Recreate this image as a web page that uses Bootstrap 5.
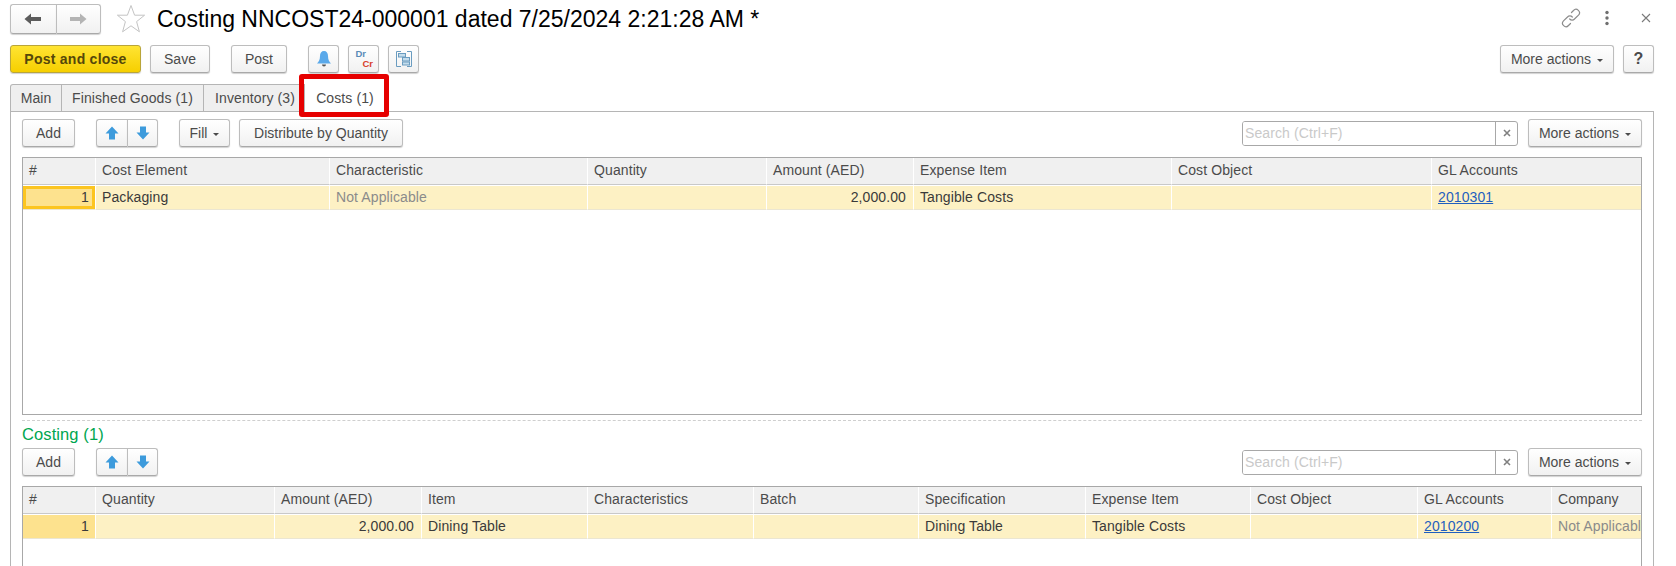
<!DOCTYPE html>
<html lang="en">
<head>
    <meta charset="UTF-8">
    <meta name="viewport" content="width=device-width, initial-scale=1.0">
    <title>Costing NNCOST24-000001</title>
    <link href="https://cdn.jsdelivr.net/npm/bootstrap@5.3.2/dist/css/bootstrap.min.css" rel="stylesheet">
    <style>
        html, body { height: 566px; overflow: hidden; }
        body {
            background: #fff;
            color: #4b4b4b;
            font-family: "Liberation Sans", Arial, sans-serif;
            font-size: 14px;
            letter-spacing: .1px;
        }
        .doc-page { height: 566px; padding: 0 22px 0 10px; }
        .title-row { height: 45px; padding-top: 4px; }
        .doc-title { font-size: 23px; color: #000; margin: 0 0 0 11px; font-weight: 400; line-height: 30px; white-space: nowrap; letter-spacing: 0; }
        .star-icon { margin-left: 15px; }
        .top-icons { height: 28px; margin-right: 3px; }
        .top-icons .icon-dots { margin-left: 24px; }
        .top-icons .icon-close { margin-left: 32px; }

        .ui-btn {
            height: 28px;
            padding: 0;
            display: inline-flex;
            align-items: center;
            justify-content: center;
            border: 1px solid #bdbdbd;
            border-bottom-color: #a9a9a9;
            border-radius: 3px;
            background: linear-gradient(#ffffff, #f1f1f1);
            box-shadow: 0 1px 1px rgba(0,0,0,.18);
            color: #4b4b4b;
            font-size: 14px;
            white-space: nowrap;
            flex: none;
        }
        .caret-mark { display: inline-block; margin-left: 6px; margin-top: 2px; border: 3px solid transparent; border-top: 3px solid #4b4b4b; border-bottom: 0; }
        .btn-main {
            width: 131px;
            font-weight: 700;
            color: #55470a;
            letter-spacing: .25px;
            background: linear-gradient(#ffe433, #f6cf00);
            border-color: #b9a53a;
        }
        .w-save { width: 60px; margin-left: 9px; }
        .w-post { width: 56px; margin-left: 21px; }
        .w-icon { width: 31px; margin-left: 9px; }
        .w-bell { margin-left: 21px; }
        .w-more { width: 114px; }
        .w-help { width: 31px; margin-left: 9px; font-weight: 700; font-size: 16px; }
        .w-add { width: 53px; }
        .w-fill { width: 51px; margin-left: 21px; }
        .w-dist { width: 164px; margin-left: 9px; }

        .arrow-pair { width: 62px; height: 28px; margin-left: 21px; flex: none; }
        .arrow-pair .ui-btn { width: 50%; }
        .arrow-pair .ui-btn:first-child { border-radius: 3px 0 0 3px; border-right: 0; }
        .arrow-pair .ui-btn:last-child { border-radius: 0 3px 3px 0; }
        .nav-pair { width: 91px; height: 30px; margin-left: 0; }
        .nav-pair .ui-btn { height: 30px; }

        .dr-mark { width: 26px; height: 22px; position: relative; font-size: 9.5px; font-weight: 700; line-height: 10px; letter-spacing: 0; }
        .dr-mark b { position: absolute; }
        .dr-mark .dr { left: 5px; top: 1px; color: #5a8cb8; }
        .dr-mark .cr { left: 12px; top: 11px; color: #d8402c; }

        .tab-row { height: 28px; margin-top: 11px; }
        .tab-item {
            height: 28px;
            display: flex;
            align-items: center;
            justify-content: center;
            background: #efefef;
            border: 1px solid #b5b5b5;
            border-left: 0;
            border-bottom: 0;
            white-space: nowrap;
        }
        .tab-item:first-child { border-left: 1px solid #b5b5b5; border-radius: 3px 0 0 0; }
        .tab-main { width: 52px; }
        .tab-goods { width: 142px; }
        .tab-stock { width: 101px; padding-left: 2px; }
        .tab-costs { width: 84px; background: #fff; border: 0; position: relative; z-index: 2; height: 29px; padding-right: 4px; }
        .red-frame {
            position: absolute;
            left: -6px;
            top: -10px;
            width: 90px;
            height: 43px;
            border: 5px solid #e60000;
            border-radius: 3px;
        }

        .tab-body {
            border: 1px solid #b5b5b5;
            border-bottom: 0;
            padding: 7px 11px 0;
            height: 455px;
            margin-top: -1px;
        }
        .tool-row { height: 28px; }
        .search-box {
            width: 276px;
            height: 25px;
            margin-right: 10px;
            border: 1px solid #a8a8a8;
            border-radius: 3px;
            overflow: hidden;
        }
        .search-box input {
            flex: 1;
            min-width: 0;
            border: 0;
            outline: 0;
            padding: 0 2px;
            font-size: 14px;
            font-family: inherit;
            letter-spacing: .1px;
        }
        .search-box input::placeholder { color: #c9c9c9; opacity: 1; }
        .search-clear { width: 22px; border-left: 1px solid #a8a8a8; }

        .grid-frame { border: 1px solid #a8a8a8; margin-top: 10px; overflow: hidden; }
        .grid-top { height: 258px; }
        .grid-bottom { flex: 1; border-bottom: 0; }
        .cost-grid { table-layout: fixed; border-collapse: separate; border-spacing: 0; width: 1618px; }
        .cost-grid th, .cost-grid td {
            padding: 0 5px 0 6px;
            font-weight: 400;
            white-space: nowrap;
            overflow: hidden;
            border-right: 1px solid #fff;
        }
        .cost-grid th { height: 27px; padding-bottom: 2px; background: #f0f0f0; border-bottom: 1px solid #c9c9c9; }
        .cost-grid td { height: 25px; background: #fdf1c4; color: #3a3a3a; border-top: 1px solid #fff; border-bottom: 1px solid #ebe6d2; }
        .cost-grid th:last-child, .cost-grid td:last-child { border-right: 0; }
        .cost-grid a { color: #1f5fbf; }
        .cost-grid td.row-num { background: #fde28e; text-align: right; padding-right: 6px; }
        .cost-grid td.row-active { box-shadow: inset 0 0 0 3px #fcc520; }
        .cost-grid td.num-cell { text-align: right; padding-right: 7px; }
        .cost-grid td.muted-cell { color: #8b8b8b; }

        .split-line { border-top: 1px dashed #cfcfcf; margin-top: 5px; }
        .section-title { color: #00a650; font-size: 16.5px; line-height: 20px; margin-top: 3px; margin-bottom: 4px; }
    </style>
</head>
<body>

<svg width="0" height="0" class="d-block">
    <symbol id="arrow-up" viewBox="0 0 16 16"><path d="M8 1.5 14.500 8.500H11V14.500H5V8.500H1.500Z" fill="#3d9bdc"/></symbol>
    <symbol id="arrow-down" viewBox="0 0 16 16"><path d="M8 14.500 14.500 7.500H11V1.500H5V7.500H1.500Z" fill="#3d9bdc"/></symbol>
    <symbol id="clear-x" viewBox="0 0 8 8"><path d="M1 1 7 7M7 1 1 7" stroke="#808080" stroke-width="1.600" fill="none"/></symbol>
</svg>

<div class="doc-page d-flex flex-column">

    <div class="title-row d-flex align-items-start">
        <div class="d-flex arrow-pair nav-pair">
            <button class="ui-btn" type="button" aria-label="Back">
                <svg width="18" height="14" viewBox="0 0 18 14"><path d="M0.5 7 7 1.5V5H17V9H7V12.500Z" fill="#5c5c5c"/></svg>
            </button>
            <button class="ui-btn" type="button" aria-label="Forward">
                <svg width="18" height="14" viewBox="0 0 18 14"><path d="M17.500 7 11 1.500V5H1V9H11V12.500Z" fill="#b4b4b4"/></svg>
            </button>
        </div>
        <svg class="star-icon" width="30" height="30" viewBox="0 0 30 30"><path d="M15 1.500 18.600 11.200H28.600L20.600 17.600 23.400 27.800 15 21.800 6.600 27.800 9.400 17.600 1.400 11.200H11.400Z" fill="#fff" stroke="#c4c4c4"/></svg>
        <h1 class="doc-title">Costing NNCOST24-000001 dated 7/25/2024 2:21:28 AM *</h1>
        <div class="top-icons d-flex align-items-center ms-auto">
            <svg width="20" height="20" viewBox="0 0 20 20" fill="none" stroke="#8c8c8c" stroke-width="1.200" stroke-linecap="round">
                <path d="M10.500 4.500 12.500 2.500a3.300 3.300 0 0 1 5 4.700L13.500 11a3.300 3.300 0 0 1-4.800 0"/>
                <path d="M9.500 15.500 7.500 17.500a3.300 3.300 0 0 1-5-4.700L6.500 9a3.300 3.300 0 0 1 4.800 0"/>
            </svg>
            <svg class="icon-dots" width="4" height="16" viewBox="0 0 4 16" fill="#6f6f6f"><circle cx="2" cy="2.500" r="1.700"/><circle cx="2" cy="8" r="1.700"/><circle cx="2" cy="13.500" r="1.700"/></svg>
            <svg class="icon-close" width="10" height="10" viewBox="0 0 10 10" stroke="#7a7a7a" stroke-width="1.100"><path d="M1 1 9 9M9 1 1 9"/></svg>
        </div>
    </div>

    <div class="d-flex align-items-center">
        <button class="ui-btn btn-main" type="button">Post and close</button>
        <button class="ui-btn w-save" type="button">Save</button>
        <button class="ui-btn w-post" type="button">Post</button>
        <button class="ui-btn w-icon w-bell" type="button" aria-label="Notify">
            <svg width="16" height="18" viewBox="0 0 16 18"><path d="M8 1C10.600 1 12 3 12 6 12 10 13.500 12 15 13.500H1C2.500 12 4 10 4 6 4 3 5.400 1 8 1Z" fill="#5aa9ea"/><path d="M6 14.500H10A2 2 0 0 1 6 14.500Z" fill="#555"/></svg>
        </button>
        <button class="ui-btn w-icon" type="button">
            <span class="dr-mark"><b class="dr">Dr</b><b class="cr">Cr</b></span>
        </button>
        <button class="ui-btn w-icon" type="button" aria-label="Structure">
            <svg width="16" height="16" viewBox="0 0 16 16" fill="none" stroke="#6a9cc0">
                <path d="M5 .5H.5V15.500H5M11 .5H15.500V15.500H11"/>
                <rect x="2.500" y="2.500" width="7" height="3.500" fill="#c3dcec"/>
                <rect x="6.500" y="6.500" width="7" height="3.500" fill="#c3dcec"/>
                <rect x="6.500" y="11" width="7" height="3" fill="#c3dcec"/>
            </svg>
        </button>
        <button class="ui-btn w-more ms-auto" type="button">More actions<span class="caret-mark"></span></button>
        <button class="ui-btn w-help" type="button">?</button>
    </div>

    <div class="tab-row d-flex">
        <div class="tab-item tab-main">Main</div>
        <div class="tab-item tab-goods">Finished Goods (1)</div>
        <div class="tab-item tab-stock">Inventory (3)</div>
        <div class="tab-item tab-costs">Costs (1)<span class="red-frame"></span></div>
    </div>

    <div class="tab-body d-flex flex-column">

        <div class="tool-row d-flex align-items-center">
            <button class="ui-btn w-add" type="button">Add</button>
            <div class="arrow-pair d-flex">
                <button class="ui-btn" type="button" aria-label="Up"><svg width="16" height="16"><use href="#arrow-up"/></svg></button>
                <button class="ui-btn" type="button" aria-label="Down"><svg width="16" height="16"><use href="#arrow-down"/></svg></button>
            </div>
            <button class="ui-btn w-fill" type="button">Fill<span class="caret-mark"></span></button>
            <button class="ui-btn w-dist" type="button">Distribute by Quantity</button>
            <div class="search-box d-flex ms-auto">
                <input type="text" placeholder="Search (Ctrl+F)">
                <span class="search-clear d-flex align-items-center justify-content-center"><svg width="8" height="8"><use href="#clear-x"/></svg></span>
            </div>
            <button class="ui-btn w-more" type="button">More actions<span class="caret-mark"></span></button>
        </div>

        <div class="grid-frame grid-top">
            <table class="cost-grid">
                <colgroup>
                    <col style="width:73px"><col style="width:234px"><col style="width:258px"><col style="width:179px">
                    <col style="width:147px"><col style="width:258px"><col style="width:260px"><col style="width:209px">
                </colgroup>
                <thead>
                    <tr><th>#</th><th>Cost Element</th><th>Characteristic</th><th>Quantity</th><th>Amount (AED)</th><th>Expense Item</th><th>Cost Object</th><th>GL Accounts</th></tr>
                </thead>
                <tbody>
                    <tr>
                        <td class="row-num row-active">1</td><td>Packaging</td><td class="muted-cell">Not Applicable</td><td></td>
                        <td class="num-cell">2,000.00</td><td>Tangible Costs</td><td></td><td><a href="#">2010301</a></td>
                    </tr>
                </tbody>
            </table>
        </div>

        <div class="split-line"></div>
        <div class="section-title">Costing (1)</div>

        <div class="tool-row d-flex align-items-center">
            <button class="ui-btn w-add" type="button">Add</button>
            <div class="arrow-pair d-flex">
                <button class="ui-btn" type="button" aria-label="Up"><svg width="16" height="16"><use href="#arrow-up"/></svg></button>
                <button class="ui-btn" type="button" aria-label="Down"><svg width="16" height="16"><use href="#arrow-down"/></svg></button>
            </div>
            <div class="search-box d-flex ms-auto">
                <input type="text" placeholder="Search (Ctrl+F)">
                <span class="search-clear d-flex align-items-center justify-content-center"><svg width="8" height="8"><use href="#clear-x"/></svg></span>
            </div>
            <button class="ui-btn w-more" type="button">More actions<span class="caret-mark"></span></button>
        </div>

        <div class="grid-frame grid-bottom">
            <table class="cost-grid">
                <colgroup>
                    <col style="width:73px"><col style="width:179px"><col style="width:147px"><col style="width:166px">
                    <col style="width:166px"><col style="width:165px"><col style="width:167px"><col style="width:165px">
                    <col style="width:167px"><col style="width:134px"><col style="width:89px">
                </colgroup>
                <thead>
                    <tr><th>#</th><th>Quantity</th><th>Amount (AED)</th><th>Item</th><th>Characteristics</th><th>Batch</th><th>Specification</th><th>Expense Item</th><th>Cost Object</th><th>GL Accounts</th><th>Company</th></tr>
                </thead>
                <tbody>
                    <tr>
                        <td class="row-num">1</td><td></td><td class="num-cell">2,000.00</td><td>Dining Table</td><td></td><td></td>
                        <td>Dining Table</td><td>Tangible Costs</td><td></td><td><a href="#">2010200</a></td><td class="muted-cell">Not Applicable</td>
                    </tr>
                </tbody>
            </table>
        </div>

    </div>
</div>

<script src="https://cdn.jsdelivr.net/npm/bootstrap@5.3.2/dist/js/bootstrap.bundle.min.js"></script>
</body>
</html>
